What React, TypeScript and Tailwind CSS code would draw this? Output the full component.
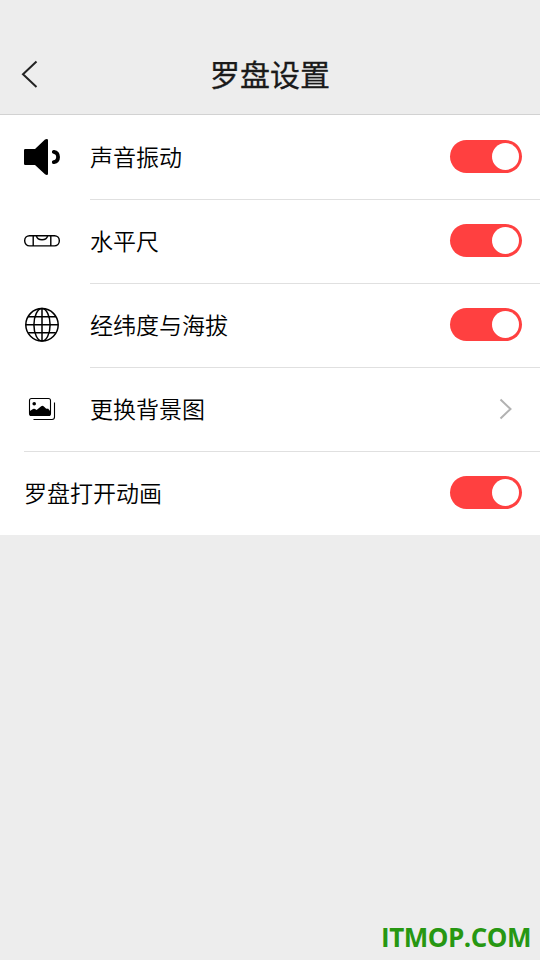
import React, { useState } from 'react';

type SettingKey = 'sound' | 'level' | 'position' | 'background' | 'animation';

interface SettingItem {
  key: SettingKey;
  label: string;
  icon?: React.ReactNode;
  link?: boolean;
}

function SpeakerIcon() {
  return (
    <svg width="36" height="36" viewBox="0 0 36 36">
      <path d="M1.2 10H11L21 .6Q22 0 22.8 0Q24 0 24 1.2V34.8Q24 36 22.8 36Q22 36 21 35.2L11 26H1.2Q0 26 0 24.8V11.2Q0 10 1.2 10Z" />
      <path d="M29.8 12.8a5.3 5.3 0 0 1 0 10.4" fill="none" stroke="#000" strokeWidth="3.8" strokeLinecap="round" />
    </svg>
  );
}

function LevelIcon() {
  return (
    <svg width="36" height="36" viewBox="0 0 36 36" fill="none" stroke="#000" strokeWidth="1.4">
      <rect x=".7" y="12.7" width="34.6" height="10.2" rx="4.8" />
      <path d="M9.2 12.7v10.2M26.8 12.7v10.2" />
      <path d="M12.4 13c.6 2.3 2.6 3.7 5.6 3.7s5-1.4 5.6-3.7" />
    </svg>
  );
}

function GlobeIcon() {
  return (
    <svg width="36" height="36" viewBox="0 0 36 36" fill="none" stroke="#000" strokeWidth="1.5">
      <circle cx="18" cy="17.8" r="16.2" />
      <ellipse cx="18" cy="17.8" rx="8.1" ry="16.2" />
      <path d="M18 1.6V34M1.8 17.8h32.4M4.2 9.8h27.6M4.2 25.8h27.6" />
    </svg>
  );
}

function PictureIcon() {
  return (
    <svg width="36" height="36" viewBox="0 0 36 36">
      <rect x="5.5" y="7.5" width="21" height="17" rx="2" fill="none" stroke="#000" strokeWidth="1.1" />
      <circle cx="10.2" cy="12.7" r="1.8" />
      <path d="M5.5 20.2L9 18q1-.6 2 0l1.6 1 4.6-3.8q1.2-1 2.4 0l2.4 2.2q1 .7 2 .2l2.5 2.8V23q0 2-2 2h-17q-2 0-2-2Z" />
      <path d="M30.5 11.5V26q0 2.5-2.5 2.5H9.5" fill="none" stroke="#000" strokeWidth="1.1" />
    </svg>
  );
}

const items: SettingItem[] = [
  { key: 'sound', label: '声音振动', icon: <SpeakerIcon /> },
  { key: 'level', label: '水平尺', icon: <LevelIcon /> },
  { key: 'position', label: '经纬度与海拔', icon: <GlobeIcon /> },
  { key: 'background', label: '更换背景图', icon: <PictureIcon />, link: true },
  { key: 'animation', label: '罗盘打开动画' },
];

function Toggle({ label, checked, onChange }: { label: string; checked: boolean; onChange: () => void }) {
  return (
    <button
      role="switch"
      aria-label={label}
      aria-checked={checked}
      onClick={onChange}
      className={`flex h-[33px] w-[72px] items-center rounded-full p-[3px] ${checked ? 'justify-end bg-[#ff4040]' : 'justify-start bg-gray-300'}`}
    >
      <span className="size-[27px] rounded-full bg-white" />
    </button>
  );
}

export default function App() {
  const [enabled, setEnabled] = useState<Record<string, boolean>>({
    sound: true,
    level: true,
    position: true,
    animation: true,
  });

  const toggle = (key: SettingKey) => setEnabled((prev) => ({ ...prev, [key]: !prev[key] }));

  return (
    <div className="flex h-screen flex-col bg-[#ededed] font-['Noto_Sans_CJK_SC',sans-serif] text-black">
      <header className="grid h-[115px] shrink-0 grid-cols-[80px_1fr_80px] items-center border-b border-[#d2d2d2] pt-[34px]">
        <button className="pl-5" aria-label="返回">
          <svg width="20" height="28" viewBox="0 0 20 28" fill="none" stroke="#222" strokeWidth="2">
            <path d="M16.5 1.5L3 14.3l13.5 12.6" />
          </svg>
        </button>
        <h1 className="pb-0.5 text-center text-[30px] leading-none font-normal text-[#1a1a1a] [-webkit-text-stroke:0.3px_#1a1a1a]">
          罗盘设置
        </h1>
      </header>

      <main className="bg-white">
        {items.map((item, index) => (
          <div key={item.key} className="flex h-[84px] pl-6">
            {item.icon && <div className="flex w-[66px] shrink-0 items-center">{item.icon}</div>}
            <div
              className={`flex flex-1 items-center justify-between border-t pr-[18px] pb-0.5 ${index === 0 ? 'border-transparent' : 'border-[#e0e0e0]'}`}
            >
              <span className="pb-0.5 text-[23px] leading-[34px] font-[350]">{item.label}</span>
              {item.link ? (
                <svg width="22" height="22" viewBox="0 0 22 22" fill="none" stroke="#b2b2b2" strokeWidth="2" className="mr-1">
                  <path d="M4.5 1.5L14.5 11l-10 9.5" />
                </svg>
              ) : (
                <Toggle label={item.label} checked={enabled[item.key]} onChange={() => toggle(item.key)} />
              )}
            </div>
          </div>
        ))}
      </main>

      <footer className="mt-auto pr-[9px] pb-2 text-right font-['Open_Sans',sans-serif] text-[26px] leading-[30px] font-bold tracking-[-0.5px] text-[#279712]">
        ITMOP.COM
      </footer>
    </div>
  );
}
